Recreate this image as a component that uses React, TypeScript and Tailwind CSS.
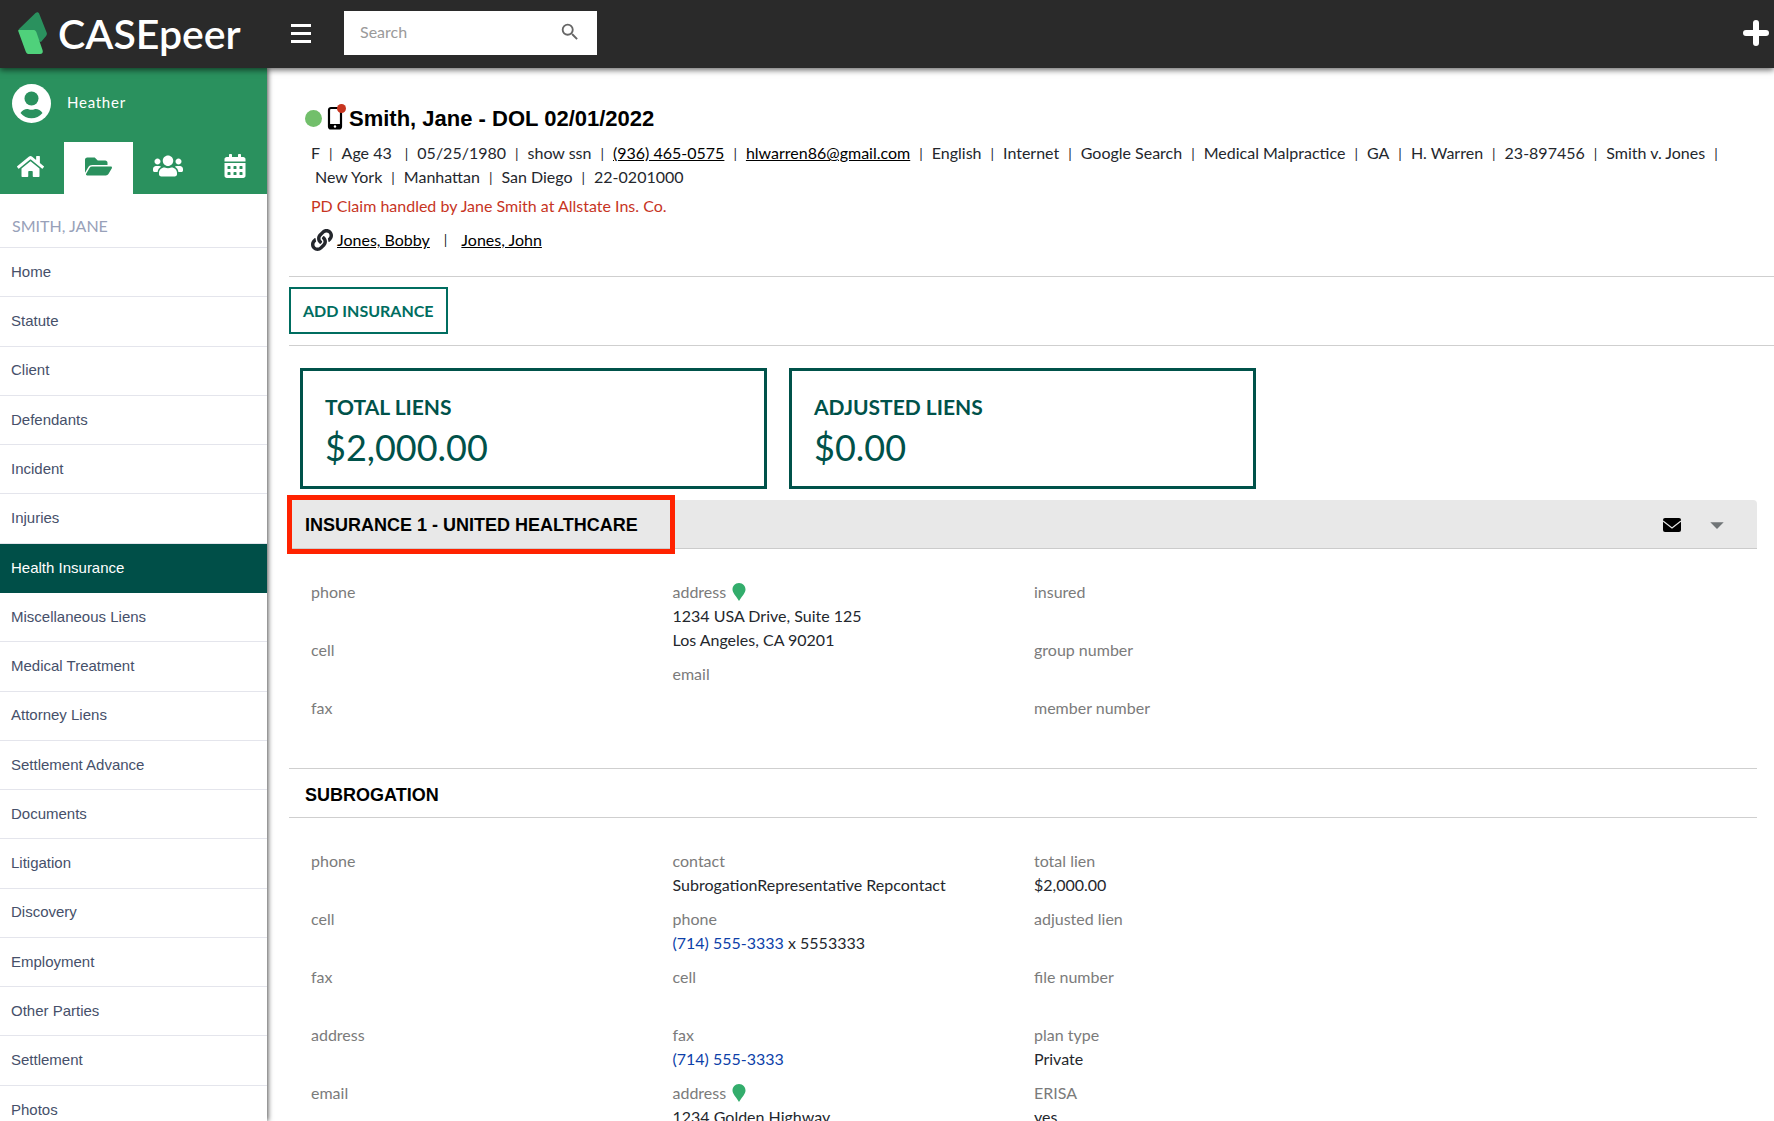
import type { ReactNode } from "react";
import { FaCalendarAlt, FaFolderOpen, FaHome, FaLink, FaUsers } from "react-icons/fa";
import { MdArrowDropDown, MdSearch } from "react-icons/md";

type Field = {
  label: string;
  lines?: ReactNode[];
  hasPin?: boolean;
};

const menuItems = [
  "Home",
  "Statute",
  "Client",
  "Defendants",
  "Incident",
  "Injuries",
  "Health Insurance",
  "Miscellaneous Liens",
  "Medical Treatment",
  "Attorney Liens",
  "Settlement Advance",
  "Documents",
  "Litigation",
  "Discovery",
  "Employment",
  "Other Parties",
  "Settlement",
  "Photos",
];

const insuranceColumns: Field[][] = [
  [{ label: "phone" }, { label: "cell" }, { label: "fax" }],
  [
    {
      label: "address",
      hasPin: true,
      lines: ["1234 USA Drive, Suite 125", "Los Angeles, CA 90201"],
    },
    { label: "email" },
  ],
  [{ label: "insured" }, { label: "group number" }, { label: "member number" }],
];

const subrogationColumns: Field[][] = [
  [
    { label: "phone" },
    { label: "cell" },
    { label: "fax" },
    { label: "address" },
    { label: "email" },
  ],
  [
    { label: "contact", lines: ["SubrogationRepresentative Repcontact"] },
    {
      label: "phone",
      lines: [
        <>
          <PhoneLink number="(714) 555-3333" /> x 5553333
        </>,
      ],
    },
    { label: "cell" },
    { label: "fax", lines: [<PhoneLink number="(714) 555-3333" />] },
    { label: "address", hasPin: true, lines: ["1234 Golden Highway"] },
  ],
  [
    { label: "total lien", lines: ["$2,000.00"] },
    { label: "adjusted lien" },
    { label: "file number" },
    { label: "plan type", lines: ["Private"] },
    { label: "ERISA", lines: ["yes"] },
  ],
];

const caseDetails = [
  "English",
  "Internet",
  "Google Search",
  "Medical Malpractice",
  "GA",
  "H. Warren",
  "23-897456",
  "Smith v. Jones",
];

function PhoneLink({ number }: { number: string }) {
  return (
    <a href="#call" className="text-[#0d3fa9]">
      {number}
    </a>
  );
}

function Divider() {
  return <span className="mx-[9px] text-sm">|</span>;
}

function Logo() {
  return (
    <a href="#dashboard" className="flex w-[267px] items-center pl-[18px] text-white">
      <svg width="30" height="43" viewBox="0 0 30 43" aria-hidden="true">
        <path d="M17.500 1c1.500-1.300 3-1.100 3.700.7l7.500 19c.4 1.200.2 2.200-.6 3.200L23 30 6 24 .5 17.500z" fill="#2a915e" />
        <path d="M1 18h14c1.700 0 2.800.6 3.400 2.200l6.200 18c.7 2.400-.3 3.800-2.600 3.800H11.500c-2.200 0-3.200-.8-3.900-2.800L.4 19.500C0 18.500.1 18 1 18z" fill="#4fd17b" />
      </svg>
      <span className="ml-2.5 text-[41px] leading-none font-semibold">CASEpeer</span>
    </a>
  );
}

function TopBar() {
  return (
    <header className="relative z-20 flex h-[68px] items-center bg-[#2a2a2a] pb-0.5 shadow-[0_2px_6px_rgba(0,0,0,0.6)]">
      <Logo />
      <button type="button" aria-label="Toggle menu" className="ml-6 flex w-5 flex-col gap-[5px]">
        <span className="h-[3px] bg-white" />
        <span className="h-[3px] bg-white" />
        <span className="h-[3px] bg-white" />
      </button>
      <label className="ml-[33px] flex h-11 w-[253px] items-center bg-white px-4 pb-0.5">
        <input
          type="search"
          aria-label="Search"
          placeholder="Search"
          className="min-w-0 flex-1 text-base text-gray-800 outline-none placeholder:text-[#9a9a9a]"
        />
        <MdSearch className="size-[22px] text-[#666]" />
      </label>
      <button type="button" aria-label="Add" className="mr-1 ml-auto text-white">
        <svg width="28" height="28" viewBox="0 0 28 28" fill="none" stroke="currentColor" strokeWidth="6" strokeLinecap="round">
          <path d="M14 4v20M4 14h20" />
        </svg>
      </button>
    </header>
  );
}

function Sidebar() {
  return (
    <aside className="z-10 w-[267px] shrink-0 bg-white shadow-[1px_0_5px_rgba(0,0,0,0.7)]">
      <div className="bg-[#2a915e] text-white">
        <div className="flex h-[74px] items-center gap-4 px-3 pb-1">
          <svg width="39" height="39" viewBox="0 0 39 39" aria-hidden="true">
            <circle cx="19.500" cy="19.500" r="19.500" fill="#fff" />
            <circle cx="19.500" cy="14.500" r="7" fill="#2a915e" />
            <path d="M8.500 29c2-3.500 6-4.500 8-3.800 2 .8 4 .8 6 0 2-.7 6 .3 8 3.800-5.500 7-16.500 7-22 0z" fill="#2a915e" />
          </svg>
          <span className="pb-0.5 text-[15px] tracking-wider">Heather</span>
        </div>
        <nav aria-label="Areas" className="grid h-[52px] grid-cols-[64px_69px_1fr_64px]">
          <a href="#home" aria-label="Home" className="flex items-center justify-center pr-1 pb-1">
            <FaHome className="size-[27px]" />
          </a>
          <a href="#cases" aria-label="Cases" className="flex items-center justify-center bg-white pb-1 text-[#2a915e]">
            <FaFolderOpen className="size-[27px]" />
          </a>
          <a href="#contacts" aria-label="Contacts" className="flex items-center justify-center pb-1">
            <FaUsers className="size-[30px]" />
          </a>
          <a href="#calendar" aria-label="Calendar" className="flex items-center justify-center pb-1">
            <FaCalendarAlt className="size-6" />
          </a>
        </nav>
      </div>
      <h2 className="flex h-[54px] items-center border-b border-[#e4e5ec] px-3 pt-2.5 text-base text-[#98a1b9]">
        SMITH, JANE
      </h2>
      <nav aria-label="Case" className="grid h-[887px] auto-rows-fr font-['Liberation_Sans',Arial,sans-serif] text-[15px] text-[#46506a]">
        {menuItems.map((item) => (
          <a
            key={item}
            href="#section"
            className={
              item === "Health Insurance"
                ? "flex items-center bg-[#004f48] px-[11px] text-white"
                : "flex items-center border-b border-[#e4e5ec] px-[11px]"
            }
          >
            {item}
          </a>
        ))}
      </nav>
    </aside>
  );
}

function CaseHeader() {
  return (
    <section className="border-b border-[#cfcfcf] pt-8 pb-6">
      <div className="flex h-9 items-center pl-4 text-black">
        <span className="size-[17px] rounded-full bg-[#72bf6b]" />
        <span className="relative ml-1 flex">
          <svg width="18" height="24" viewBox="0 0 18 24" aria-hidden="true">
            <rect x="3" y="2" width="12" height="20.500" rx="2" fill="none" stroke="#000" strokeWidth="2.200" />
            <path d="M3 18h12v4.500H3z" />
            <circle cx="9" cy="20.500" r="1.200" fill="#fff" />
          </svg>
          <span className="absolute -top-0.5 -right-0.5 size-[9px] rounded-full bg-[#c7351f]" />
        </span>
        <h1 className="ml-[5px] font-['Liberation_Sans',Arial,sans-serif] text-[22px] font-bold">
          Smith, Jane - DOL 02/01/2022
        </h1>
      </div>
      <p className="mt-[5px] px-[22px] leading-6">
        F<Divider />Age 43 <Divider />05/25/1980<Divider />show ssn<Divider />
        <a href="#call" className="text-black underline">(936) 465-0575</a>
        <Divider />
        <a href="#mail" className="text-black underline">hlwarren86@gmail.com</a>
        <Divider />
        {caseDetails.map((detail) => (
          <span key={detail}>
            {detail}
            <Divider />
          </span>
        ))}
        <br />
        <span className="ml-1">New York</span>
        <Divider />Manhattan<Divider />San Diego<Divider />22-0201000
      </p>
      <p className="mt-[5px] px-[22px] leading-6 text-[#c7351f]">
        PD Claim handled by Jane Smith at Allstate Ins. Co.
      </p>
      <p className="mt-2.5 flex items-center px-[22px] leading-6">
        <FaLink className="mr-1 size-[22px]" />
        <a href="#bobby" className="text-black underline">Jones, Bobby</a>
        <span className="mx-3.5 text-sm">|</span>
        <a href="#john" className="text-black underline">Jones, John</a>
      </p>
    </section>
  );
}

function LienCard({ title, amount }: { title: string; amount: string }) {
  return (
    <div className="h-[121px] border-3 border-[#00524a] px-[22px] pt-5 text-[#00524a]">
      <h3 className="text-[21px] leading-8 font-bold">{title}</h3>
      <p className="text-4xl leading-12">{amount}</p>
    </div>
  );
}

function FieldColumns({ columns }: { columns: Field[][] }) {
  return (
    <div className="grid grid-cols-4 pl-[22px]">
      {columns.map((fields, index) => (
        <dl key={index} className="leading-6">
          {fields.map((field) => (
            <div key={field.label} className="mb-2.5">
              <dt className="flex items-center gap-1.5 text-[#7b7b7b]">
                {field.label}
                {field.hasPin && (
                  <svg width="14" height="18" viewBox="0 0 14 18" aria-hidden="true">
                    <path d="M7 0c4 0 6.500 3 6.500 6.500C13.500 10 10 13 7 18 4 13 .5 10 .5 6.500.5 3 3 0 7 0z" fill="#33ad6c" />
                  </svg>
                )}
              </dt>
              <dd className="min-h-6">
                {field.lines?.map((line, i) => (
                  <div key={i}>{line}</div>
                ))}
              </dd>
            </div>
          ))}
        </dl>
      ))}
    </div>
  );
}

export default function App() {
  return (
    <div className="flex h-screen flex-col overflow-hidden bg-white font-[Lato,'Open_Sans',sans-serif] text-base text-[#24272d]">
      <TopBar />
      <div className="flex min-h-0 flex-1">
        <Sidebar />
        <main className="min-w-0 flex-1 pl-[22px]">
          <CaseHeader />
          <div className="border-b border-[#cfcfcf] pt-2.5 pb-[11px]">
            <button
              type="button"
              className="h-[47px] border-2 border-[#006d60] px-3 text-base font-bold text-[#006d60]"
            >
              ADD INSURANCE
            </button>
          </div>
          <div className="grid grid-cols-3 gap-[22px] pt-[22px] pr-[29px] pb-[11px] pl-[11px]">
            <LienCard title="TOTAL LIENS" amount="$2,000.00" />
            <LienCard title="ADJUSTED LIENS" amount="$0.00" />
          </div>
          <div className="mr-[17px]">
            <section>
              <div className="relative flex h-[49px] items-center rounded-t-sm border-b border-[#cbcbcb] bg-[#e8e8e8] pt-0.5 pr-6 pl-4 text-black">
                <span className="absolute -top-[5px] -left-0.5 h-[59px] w-[388px] border-5 border-[#ff2200]" />
                <h2 className="font-['Liberation_Sans',Arial,sans-serif] text-lg font-bold">
                  INSURANCE 1 - UNITED HEALTHCARE
                </h2>
                <button type="button" aria-label="Send message" className="ml-auto">
                  <svg width="18" height="14" viewBox="0 0 18 14" aria-hidden="true">
                    <rect width="18" height="14" rx="2" />
                    <path d="M0 3l9 7 9-7" fill="none" stroke="#e8e8e8" strokeWidth="1.200" />
                  </svg>
                </button>
                <button type="button" aria-label="Collapse" className="ml-5 text-[#707577]">
                  <MdArrowDropDown className="size-8" />
                </button>
              </div>
              <div className="pt-[31px] pb-3.5">
                <FieldColumns columns={insuranceColumns} />
              </div>
            </section>
            <section>
              <h2 className="flex h-[50px] items-center border-y border-[#cfcfcf] pt-1 pl-4 font-['Liberation_Sans',Arial,sans-serif] text-lg font-bold text-black">
                SUBROGATION
              </h2>
              <div className="pt-[31px]">
                <FieldColumns columns={subrogationColumns} />
              </div>
            </section>
          </div>
        </main>
      </div>
    </div>
  );
}
